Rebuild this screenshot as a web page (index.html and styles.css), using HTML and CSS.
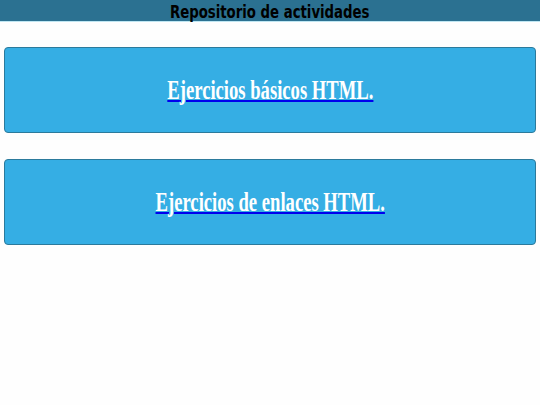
FILE: index.html
```html
<!DOCTYPE html>
<html lang="es">
<head>
  <meta charset="UTF-8">
  <title>Repositorio de actividades</title>
  <link rel="stylesheet" href="styles.css">
</head>
<body>
  <div class="header">
    <h1>Repositorio de actividades</h1>
  </div>
  <div class="lista">
    <a class="tarjeta" href="#"><span>Ejercicios básicos HTML.</span></a>
    <a class="tarjeta" href="#"><span>Ejercicios de enlaces HTML.</span></a>
  </div>
</body>
</html>
```

FILE: styles.css
```css
body {
  margin: 0;
  background: #fefefe;
}

.header {
  background: #2b7191;
  border-bottom: 1px solid #bfe6f2;
  height: 21px;
  text-align: center;
}

.header h1 {
  margin: 0;
  font-family: 'DejaVu Sans', sans-serif;
  font-stretch: condensed;
  font-size: 18px;
  line-height: 23px;
  color: #000;
  display: inline-block;
  transform: scaleX(0.82);
}

.lista {
  padding: 25px 4px 0;
}

.tarjeta {
  display: flex;
  justify-content: center;
  align-items: center;
  height: 84px;
  margin-bottom: 26px;
  background: #35aee4;
  border: 1px solid #2b7a9c;
  border-radius: 4px;
  color: #0000ee;
  text-decoration: underline;
  text-decoration-thickness: 2px;
}

.tarjeta span {
  font-family: 'Liberation Serif', serif;
  font-weight: bold;
  font-size: 27px;
  color: #fff;
  display: inline-block;
  transform: scaleX(0.69);
}
```
